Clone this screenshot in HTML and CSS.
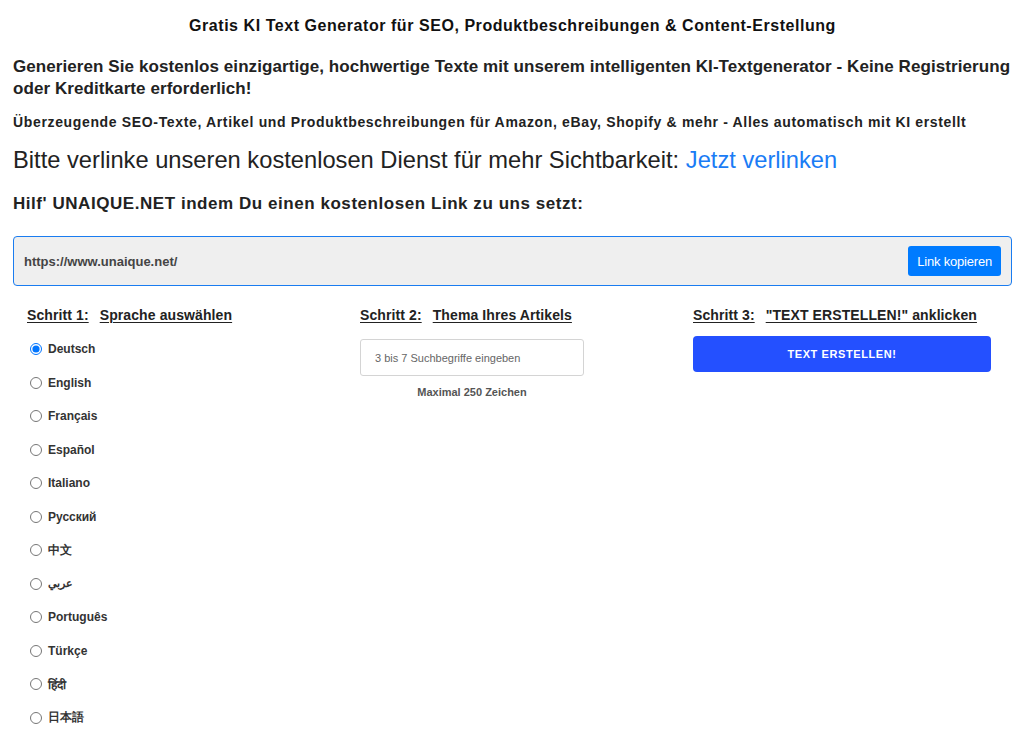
FILE: index.html
```html
<!DOCTYPE html>
<html lang="de">
<head>
<meta charset="utf-8">
<title>Gratis KI Text Generator</title>
<link rel="stylesheet" href="styles.css">
</head>
<body>
<div class="page">
  <h1 class="title">Gratis KI Text Generator für SEO, Produktbeschreibungen &amp; Content-Erstellung</h1>
  <h2 class="lead">Generieren Sie kostenlos einzigartige, hochwertige Texte mit unserem intelligenten KI-Textgenerator - Keine Registrierung oder Kreditkarte erforderlich!</h2>
  <h3 class="sub">Überzeugende SEO-Texte, Artikel und Produktbeschreibungen für Amazon, eBay, Shopify &amp; mehr - Alles automatisch mit KI erstellt</h3>
  <p class="plea">Bitte verlinke unseren kostenlosen Dienst für mehr Sichtbarkeit: <a href="#" class="plea-link">Jetzt verlinken</a></p>
  <p class="help">Hilf' UNAIQUE.NET indem Du einen kostenlosen Link zu uns setzt:</p>
  <div class="linkbox">
    <span class="linkbox-url">https://www.unaique.net/</span>
    <button class="copy-btn">Link kopieren</button>
  </div>
  <div class="steps">
    <div class="step">
      <div class="step-head"><span class="u">Schritt 1:</span><span class="u">Sprache auswählen</span></div>
      <ul class="langs">
        <li><label><input type="radio" name="lang" checked> Deutsch</label></li>
        <li><label><input type="radio" name="lang"> English</label></li>
        <li><label><input type="radio" name="lang"> Français</label></li>
        <li><label><input type="radio" name="lang"> Español</label></li>
        <li><label><input type="radio" name="lang"> Italiano</label></li>
        <li><label><input type="radio" name="lang"> Русский</label></li>
        <li><label><input type="radio" name="lang"> 中文</label></li>
        <li><label><input type="radio" name="lang"> <span class="ar">عربي</span></label></li>
        <li><label><input type="radio" name="lang"> Português</label></li>
        <li><label><input type="radio" name="lang"> Türkçe</label></li>
        <li><label><input type="radio" name="lang"> हिंदी</label></li>
        <li><label><input type="radio" name="lang"> 日本語</label></li>
      </ul>
    </div>
    <div class="step">
      <div class="step-head"><span class="u">Schritt 2:</span><span class="u">Thema Ihres Artikels</span></div>
      <div class="topic">
        <input class="topic-input" type="text" placeholder="3 bis 7 Suchbegriffe eingeben">
        <div class="topic-note">Maximal 250 Zeichen</div>
      </div>
    </div>
    <div class="step">
      <div class="step-head"><span class="u">Schritt 3:</span><span class="u">"TEXT ERSTELLEN!" anklicken</span></div>
      <button class="create-btn">TEXT ERSTELLEN!</button>
    </div>
  </div>
</div>
</body>
</html>
```
FILE: styles.css
```css
html, body {
  margin: 0;
  padding: 0;
  background: #fff;
}
body {
  font-family: "Liberation Sans", Arial, sans-serif;
  color: #222;
}
.page {
  padding: 0 20px 0 13px;
}
.title {
  margin: 0;
  padding-top: 16px;
  text-align: center;
  font-size: 16px;
  line-height: 20px;
  font-weight: bold;
  letter-spacing: 0.55px;
  color: #111;
}
.lead {
  margin: 20px 0 0;
  font-size: 17px;
  line-height: 22px;
  font-weight: bold;
  letter-spacing: 0.08px;
}
.sub {
  margin: 13px 0 0;
  font-size: 14px;
  line-height: 18px;
  font-weight: bold;
  letter-spacing: 0.65px;
}
.plea {
  margin: 14px 0 0;
  font-size: 23.7px;
  line-height: 30px;
  color: #222;
}
.plea-link {
  color: #1a7cf5;
  text-decoration: none;
}
.help {
  margin: 18px 0 0;
  font-size: 17px;
  line-height: 22px;
  font-weight: bold;
  letter-spacing: 0.55px;
}
.linkbox {
  margin-top: 21px;
  height: 48px;
  border: 1px solid #1a7cf0;
  border-radius: 4px;
  background: #efefef;
  display: flex;
  align-items: center;
  justify-content: space-between;
  padding: 0 10px 0 10px;
}
.linkbox-url {
  font-size: 13px;
  font-weight: bold;
  color: #444;
}
.copy-btn {
  background: #007bff;
  color: #fff;
  border: none;
  border-radius: 3px;
  height: 30px;
  padding: 0 9px;
  font-family: "Liberation Sans", Arial, sans-serif;
  font-size: 13px;
  letter-spacing: -0.2px;
}
.steps {
  display: grid;
  grid-template-columns: repeat(3, 333px);
  margin-top: 20px;
}
.step {
  padding: 0 14px;
}
.step-head {
  display: flex;
  gap: 11px;
  font-size: 14px;
  font-weight: bold;
  letter-spacing: 0.1px;
  line-height: 18px;
}
.u {
  text-decoration: underline;
  text-underline-offset: 2px;
}
.langs {
  list-style: none;
  margin: 17px 0 0;
  padding: 0;
}
.langs li {
  height: 33.5px;
  font-size: 12px;
  font-weight: bold;
  color: #333;
}
.langs label {
  display: flex;
  align-items: center;
  gap: 4px;
  height: 16px;
}
.langs input {
  margin: 0 2px 0 3px;
  width: 12px;
  height: 12px;
}
.ar {
  font-size: 11px;
}
.topic {
  width: 224px;
  margin-top: 15px;
}
.topic-input {
  box-sizing: border-box;
  width: 224px;
  height: 37px;
  border: 1px solid #d4d4d4;
  border-radius: 3px;
  padding: 0 14px;
  font-family: "Liberation Sans", Arial, sans-serif;
  font-size: 11px;
  color: #555;
}
.topic-input::placeholder {
  color: #666;
}
.topic-note {
  margin-top: 10px;
  text-align: center;
  font-size: 11px;
  font-weight: bold;
  color: #555;
}
.create-btn {
  display: block;
  margin-top: 12px;
  width: 298px;
  height: 36px;
  border: none;
  border-radius: 4px;
  background: #2450ff;
  color: #fff;
  font-family: "Liberation Sans", Arial, sans-serif;
  font-size: 11px;
  font-weight: bold;
  letter-spacing: 0.6px;
}
```
